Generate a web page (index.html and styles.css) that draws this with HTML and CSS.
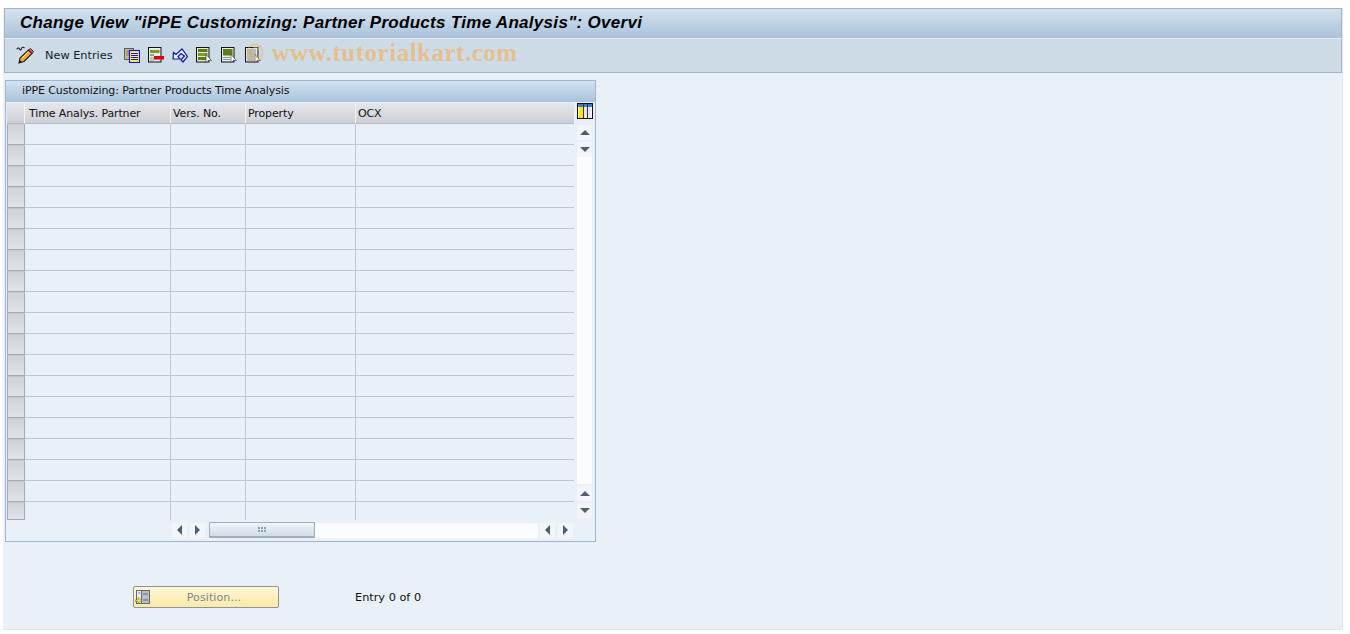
FILE: index.html
```html
<!DOCTYPE html>
<html lang="en">
<head>
<meta charset="utf-8">
<title>Change View</title>
<link rel="stylesheet" href="styles.css">
</head>
<body>
<div class="screen">
  <header class="titlebar"><h1>Change View "iPPE Customizing: Partner Products Time Analysis": Overvi</h1></header>
  <div class="toolbar">
    <svg class="ic ic-pen" viewBox="0 0 18 18"><path d="M1 3.500c0-2 2-2 2.500-.5s2 1 2-.5 2-1.500 3-.5" fill="none" stroke="#222" stroke-width="1.100"/><path d="M3 17l1-5L12.500 4l3.500 3.500L8 15.500z" fill="#f7a833" stroke="#1a1a1a" stroke-width="1.100"/><path d="M12.500 4l3.500 3.500 1.500-2L14.500 2.500z" fill="#e2574c" stroke="#1a1a1a" stroke-width=".8"/><path d="M3 17l.8-3 2.200 2z" fill="#111"/><path d="M6 12l6-6" stroke="#fff3c4"/></svg>
    <span class="newentries">New Entries</span>
    <svg class="ic ic-copy" viewBox="0 0 16 16"><rect x=".5" y="1.500" width="9" height="11" fill="#cdbb85" stroke="#55606c"/><path d="M2 4h6M2 6h6M2 8h6" stroke="#8a7f5a"/><rect x="5.500" y="3.500" width="10" height="12" fill="#fff36b" stroke="#1414c8" stroke-width="1.200"/><path d="M7 6.500h7M7 8.500h7M7 10.500h7M7 12.500h7" stroke="#1414c8"/></svg>
    <svg class="ic ic-del" viewBox="0 0 16 16"><rect x=".5" y=".5" width="12.500" height="14.500" fill="#e8ecec" stroke="#111"/><rect x="2" y="3" width="9.500" height="3" fill="#7d9a2a"/><rect x="2" y="7" width="4" height="2" fill="#8fa86a"/><path d="M2 11h4M2 13h4" stroke="#8a9aa8"/><rect x="6" y="9" width="10" height="3.500" fill="#d8000c"/></svg>
    <svg class="ic ic-undo" viewBox="0 0 16 16"><path d="M1 12H8L6 9.500 9 6.500 12.500 9 9 13 11 15 15.500 9.500 10 2 4 7.500 1.500 5.500z" fill="#eef3fb" stroke="#1414a0" stroke-width="1.200"/></svg>
    <svg class="ic ic-sel" viewBox="0 0 16 16"><rect x=".5" y=".5" width="12.500" height="14.500" fill="#e4e8dc" stroke="#111"/><rect x="2" y="2" width="9.500" height="3" fill="#5f7d10"/><rect x="2" y="6" width="9.500" height="3" fill="#7f9a32"/><rect x="2" y="10" width="9.500" height="3" fill="#5f7d10"/><path d="M10 7.500v8l2-2h3.500z" fill="#fff" stroke="#333" stroke-width=".6"/></svg>
    <svg class="ic ic-sel2" viewBox="0 0 16 16"><rect x=".5" y=".5" width="12.500" height="14.500" fill="#e8ecec" stroke="#111"/><rect x="2" y="2" width="9.500" height="6.500" fill="#5f7d10"/><path d="M2 10.500h7M2 12.500h7" stroke="#7d9ab0"/><path d="M10 7.500v8l2-2h3.500z" fill="#fff" stroke="#333" stroke-width=".6"/></svg>
    <svg class="ic ic-sel3" viewBox="0 0 16 16"><rect x=".5" y=".5" width="12.500" height="14.500" fill="#e8ebee" stroke="#111"/><path d="M2 3h9M2 5h9M2 7h9M2 9h7M2 11h7M2 13h7" stroke="#7a8894"/><path d="M10 7.500v8l2-2h3.500z" fill="#fff" stroke="#333" stroke-width=".6"/></svg>
    <span class="watermark">© www.tutorialkart.com</span>
  </div>
  <main class="content">
    <section class="panel">
      <h2 class="panel-title">iPPE Customizing: Partner Products Time Analysis</h2>
      <div class="grid-area">
        <div class="grid-main">
          <div class="row head">
            <div class="sel"></div>
            <div class="cell first">Time Analys. Partner</div>
            <div class="cell">Vers. No.</div>
            <div class="cell">Property</div>
            <div class="cell last">OCX</div>
          </div>
          <div class="row"><div class="sel"></div><div class="cell"></div><div class="cell"></div><div class="cell"></div><div class="cell last"></div></div>
          <div class="row"><div class="sel"></div><div class="cell"></div><div class="cell"></div><div class="cell"></div><div class="cell last"></div></div>
          <div class="row"><div class="sel"></div><div class="cell"></div><div class="cell"></div><div class="cell"></div><div class="cell last"></div></div>
          <div class="row"><div class="sel"></div><div class="cell"></div><div class="cell"></div><div class="cell"></div><div class="cell last"></div></div>
          <div class="row"><div class="sel"></div><div class="cell"></div><div class="cell"></div><div class="cell"></div><div class="cell last"></div></div>
          <div class="row"><div class="sel"></div><div class="cell"></div><div class="cell"></div><div class="cell"></div><div class="cell last"></div></div>
          <div class="row"><div class="sel"></div><div class="cell"></div><div class="cell"></div><div class="cell"></div><div class="cell last"></div></div>
          <div class="row"><div class="sel"></div><div class="cell"></div><div class="cell"></div><div class="cell"></div><div class="cell last"></div></div>
          <div class="row"><div class="sel"></div><div class="cell"></div><div class="cell"></div><div class="cell"></div><div class="cell last"></div></div>
          <div class="row"><div class="sel"></div><div class="cell"></div><div class="cell"></div><div class="cell"></div><div class="cell last"></div></div>
          <div class="row"><div class="sel"></div><div class="cell"></div><div class="cell"></div><div class="cell"></div><div class="cell last"></div></div>
          <div class="row"><div class="sel"></div><div class="cell"></div><div class="cell"></div><div class="cell"></div><div class="cell last"></div></div>
          <div class="row"><div class="sel"></div><div class="cell"></div><div class="cell"></div><div class="cell"></div><div class="cell last"></div></div>
          <div class="row"><div class="sel"></div><div class="cell"></div><div class="cell"></div><div class="cell"></div><div class="cell last"></div></div>
          <div class="row"><div class="sel"></div><div class="cell"></div><div class="cell"></div><div class="cell"></div><div class="cell last"></div></div>
          <div class="row"><div class="sel"></div><div class="cell"></div><div class="cell"></div><div class="cell"></div><div class="cell last"></div></div>
          <div class="row"><div class="sel"></div><div class="cell"></div><div class="cell"></div><div class="cell"></div><div class="cell last"></div></div>
          <div class="row"><div class="sel"></div><div class="cell"></div><div class="cell"></div><div class="cell"></div><div class="cell last"></div></div>
          <div class="row final"><div class="sel"></div><div class="cell"></div><div class="cell"></div><div class="cell"></div><div class="cell last"></div></div>
        </div>
        <div class="vscroll">
          <div class="layout-btn">
            <svg viewBox="0 0 16 16" width="16" height="16"><rect x=".5" y=".5" width="15" height="15" fill="#fff" stroke="#111"/><rect x="1" y="1" width="14" height="3" fill="#3c7fc4"/><rect x="2" y="4" width="4" height="11" fill="#ffe600"/><rect x="7" y="4" width="3" height="11" fill="#e4e8ec"/><rect x="11" y="4" width="3" height="11" fill="#e4e8ec"/><path d="M6.500 1v14M10.500 1v14" stroke="#333"/></svg>
          </div>
          <div class="sb-btn"><i class="tri up"></i></div>
          <div class="sb-btn second"><i class="tri down"></i></div>
          <div class="v-track"></div>
          <div class="sb-btn"><i class="tri up"></i></div>
          <div class="sb-btn second"><i class="tri down"></i></div>
        </div>
      </div>
      <div class="hscroll">
        <div class="sb-btn h"><i class="tri left"></i></div>
        <div class="sb-btn h"><i class="tri right"></i></div>
        <div class="thumb"><span class="grip"></span></div>
        <div class="h-track"></div>
        <div class="sb-btn h"><i class="tri left"></i></div>
        <div class="sb-btn h"><i class="tri right"></i></div>
      </div>
    </section>
    <div class="position-row">
      <button class="position-btn" type="button">
        <svg viewBox="0 0 15 15" width="15" height="15"><rect x="1.500" y=".5" width="13" height="13" fill="#b9bfca" stroke="#666"/><rect x="1.500" y=".5" width="5" height="13" fill="#e8ecf0" stroke="#666"/><path d="M8 4h5M8 10h5" stroke="#667"/><path d="M3 3h2M4 2l1 1-1 1" fill="none" stroke="#888" stroke-width=".6"/><path d="M0 10h3V7.500l3.500 3-3.500 3V11.500H0z" fill="#ffe55c" stroke="#8a7a20" stroke-width=".6"/></svg>
        <span>Position...</span>
      </button>
      <span class="entry">Entry 0 of 0</span>
    </div>
  </main>
</div>
</body>
</html>
```

FILE: styles.css
```css
* { box-sizing: border-box; }
html, body { margin: 0; height: 100%; background: #fff; overflow: hidden; }
body {
  padding: 8px 6px 4px 3px;
  font-family: "DejaVu Sans", Tahoma, sans-serif;
  font-size: 11px;
  color: #000;
}
.screen {
  width: 1340px;
  height: 622px;
  background: #e9f0f7;
  display: flex;
  flex-direction: column;
  border-right: 1px solid #dfe6ee;
  border-bottom: 1px solid #dfe6ee;
}
.titlebar {
  height: 31px;
  margin-left: 1px;
  background: linear-gradient(#d4e2ef, #a9c2da);
  border: 1px solid #a4b3c6;
  border-bottom: 1px solid #e4edf4;
  padding: 0 0 2px 15px;
  display: flex;
  align-items: center;
}
.titlebar h1 {
  margin: 0;
  font: italic bold 17px "Liberation Sans", Arial, sans-serif;
  letter-spacing: .3px;
  white-space: nowrap;
  color: #000;
}
.toolbar {
  height: 34px;
  margin-left: 1px;
  background: #cddbe7;
  border: 1px solid #a4b3c6;
  border-top: 0;
  display: flex;
  align-items: center;
  padding: 0 0 2px 11px;
}
.ic { width: 16px; height: 16px; flex: none; }
.ic-pen { width: 18px; height: 18px; }
.newentries { margin: 0 11px 0 11px; font-size: 11.3px; color: #0f1c33; position: relative; top: 1px; }
.ic-copy, .ic-del, .ic-undo { margin-right: 8px; }
.ic-sel { margin-right: 9px; }
.ic-sel2 { margin-right: 8px; }
.watermark {
  margin-left: -15px;
  font: bold 25px "Liberation Serif", serif;
  color: rgba(255, 165, 50, .5);
  letter-spacing: .5px;
  white-space: nowrap;
  position: relative;
  top: -2px;
}
.content { padding: 7px 0 0 2px; flex: 1; display: flex; flex-direction: column; }
.panel {
  width: 591px;
  height: 462px;
  border: 1px solid #9fb5cd;
  display: flex;
  flex-direction: column;
}
.panel-title {
  margin: 0;
  height: 21px;
  background: linear-gradient(#d4e2ef, #a9c2da);
  font-weight: normal;
  font-size: 11px;
  line-height: 20px;
  padding-left: 16px;
  letter-spacing: -.1px;
  color: #111;
}
.grid-area { display: flex; height: 417px; margin-top: 1px; padding-left: 1px; }
.grid-main { width: 568px; overflow: hidden; height: 417px; }
.row { display: grid; grid-template-columns: 18px 146px 75px 110px 218px; height: 21px; }
.row.final { height: 18px; }
.sel {
  background: linear-gradient(#cfd3d8, #dfe2e6);
  border: 1px solid #a2abb8;
  border-top-color: #c4cad2;
}
.cell {
  border-right: 1px solid #c0c8d6;
  border-bottom: 1px solid #bcc7d8;
  overflow: hidden;
  white-space: nowrap;
}
.cell.last { border-right: 0; }
.final .cell { border-bottom: 0; }
.head .cell, .head .sel {
  background: linear-gradient(#e4e6ea, #cdd0d6);
  border: 0;
  border-right: 1px solid #f1f3f5;
  border-bottom: 1px solid #b4bcc8;
  padding-left: 2px;
  line-height: 22px;
  color: #111;
  font-size: 11px;
  letter-spacing: -.12px;
}
.head .cell.first { padding-left: 4px; }
.head .cell.last { border-right: 0; }
.vscroll { width: 20px; display: flex; flex-direction: column; align-items: flex-start; padding: 0 0 2px 2px; }
.layout-btn { height: 21px; width: 16px; display: flex; justify-content: center; }
.sb-btn {
  width: 15px;
  height: 15px;
  background: #f2f6fa;
  display: flex;
  align-items: center;
  justify-content: center;
  margin-top: 1px;
  flex: none;
}
.sb-btn.second { margin-top: 2px; }
.v-track { flex: 1; background: #fbfcfd; width: 15px; margin-bottom: 1px; }
.tri { width: 0; height: 0; display: block; border-style: solid; border-color: transparent; }
.tri.up { border-width: 0 5px 5px; border-bottom-color: #4d6070; }
.tri.down { border-width: 5px 5px 0; border-top-color: #4d6070; }
.tri.left { border-width: 5px 5px 5px 0; border-right-color: #4d6070; }
.tri.right { border-width: 5px 0 5px 5px; border-left-color: #4d6070; }
.hscroll {
  display: flex;
  align-items: center;
  margin-left: 166px;
  height: 16px;
  margin-top: 2px;
}
.sb-btn.h { margin: 0 3px 0 0; height: 15px; }
.thumb {
  width: 106px;
  height: 16px;
  background: linear-gradient(#f1f5f8, #cfdde6);
  border: 1px solid #a3adb8;
  border-bottom-width: 2px;
  border-radius: 1px;
  margin-left: 1px;
  display: flex;
  align-items: center;
  justify-content: center;
}
.grip { width: 9px; height: 6px; background: radial-gradient(circle at 1px 1px, #8fa0ae 0 1px, transparent 1px) 0 0 / 3px 3px; }
.h-track { width: 223px; height: 15px; background: #fbfcfd; margin-right: 2px; }
.position-row { display: flex; align-items: center; margin-top: 44px; padding-left: 128px; }
.position-btn {
  width: 146px;
  height: 22px;
  background: linear-gradient(#fff7d6, #fbe9a8);
  border: 1px solid #8f9499;
  border-radius: 2px;
  padding: 0 0 0 1px;
  display: flex;
  align-items: center;
  font: 11px "DejaVu Sans", Tahoma, sans-serif;
  letter-spacing: .1px;
  color: #7a8490;
}
.position-btn span { flex: 1; text-align: center; }
.entry { margin-left: 76px; font-size: 11.3px; color: #111; }
```
